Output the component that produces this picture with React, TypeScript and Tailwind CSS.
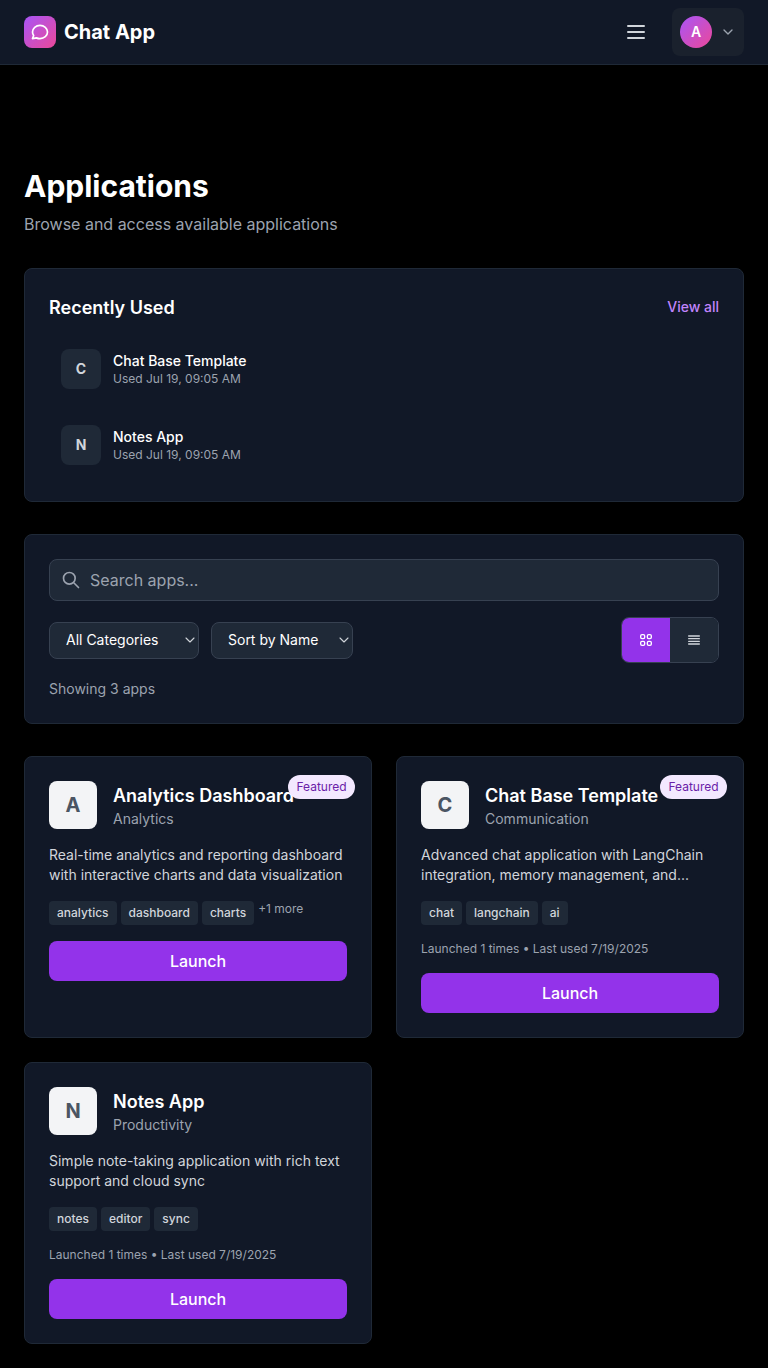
import React from "react";

type AppInfo = {
  name: string;
  category: string;
  description: string;
  tags: string[];
  more?: string;
  usage?: string;
  featured?: boolean;
};

const apps: AppInfo[] = [
  {
    name: "Analytics Dashboard",
    category: "Analytics",
    description: "Real-time analytics and reporting dashboard with interactive charts and data visualization",
    tags: ["analytics", "dashboard", "charts"],
    more: "+1 more",
    featured: true,
  },
  {
    name: "Chat Base Template",
    category: "Communication",
    description: "Advanced chat application with LangChain integration, memory management, and...",
    tags: ["chat", "langchain", "ai"],
    usage: "Launched 1 times • Last used 7/19/2025",
    featured: true,
  },
  {
    name: "Notes App",
    category: "Productivity",
    description: "Simple note-taking application with rich text support and cloud sync",
    tags: ["notes", "editor", "sync"],
    usage: "Launched 1 times • Last used 7/19/2025",
  },
];

const recent = ["Chat Base Template", "Notes App"];

function Icon({ d, className, strokeWidth = 2 }: { d: string; className: string; strokeWidth?: number }) {
  return (
    <svg
      className={className}
      viewBox="0 0 24 24"
      fill="none"
      stroke="currentColor"
      strokeWidth={strokeWidth}
      strokeLinecap="round"
      strokeLinejoin="round"
    >
      <path d={d} />
    </svg>
  );
}

function Header() {
  return (
    <header className="flex h-[65px] items-center justify-between border-b border-[#1f2937] bg-[#111827] px-6">
      <div className="flex items-center gap-2">
        <div className="flex size-8 items-center justify-center rounded-lg bg-linear-to-br/srgb from-[#a855f7] to-[#ec4899]">
          <Icon
            className="size-5 text-white"
            d="M21 12c0 4.418-4.03 8-9 8a9.863 9.863 0 01-4.255-.949L3 20l1.395-3.72C3.512 15.042 3 13.574 3 12c0-4.418 4.03-8 9-8s9 3.582 9 8z"
          />
        </div>
        <span className="text-xl font-bold text-white">Chat App</span>
      </div>
      <div className="flex items-center gap-4">
        <button className="p-2 text-[#d1d5db]" aria-label="Menu">
          <Icon className="size-6" d="M4 6h16M4 12h16M4 18h16" />
        </button>
        <button className="flex items-center gap-2 rounded-lg bg-[#1a212d] p-2">
          <span className="flex size-8 items-center justify-center rounded-full bg-linear-to-br/srgb from-[#a855f7] to-[#ec4899] text-sm font-semibold text-white">
            A
          </span>
          <Icon className="size-4 text-[#9ca3af]" d="M6 9l6 6 6-6" />
        </button>
      </div>
    </header>
  );
}

function Select({ label, className }: { label: string; className: string }) {
  return (
    <div className={`relative ${className}`}>
      <select className="block h-[37px] w-full appearance-none rounded-lg border border-[#374151] bg-[#1f2937] pb-2 pl-4 pt-[7px] text-sm text-white">
        <option>{label}</option>
      </select>
      <Icon
        className="pointer-events-none absolute right-px top-2.5 size-4 text-[#d1d5db]"
        strokeWidth={1.6}
        d="M6 9l6 6 6-6"
      />
    </div>
  );
}

function AppCard({ app }: { app: AppInfo }) {
  return (
    <article className="relative rounded-lg border border-[#1f2937] bg-[#111827] p-6">
      <div className="mb-4 flex items-center gap-4">
        <div className="flex size-12 shrink-0 items-center justify-center rounded-lg bg-[#f3f4f6] text-xl font-bold text-[#4b5563]">
          {app.name[0]}
        </div>
        <div className="min-w-0">
          <h3 className="h-7 whitespace-nowrap text-lg/[30px] font-semibold text-white">{app.name}</h3>
          <p className="text-sm text-[#9ca3af]">{app.category}</p>
        </div>
      </div>
      {app.featured && (
        <div className="absolute right-4 top-[17.5px] flex h-6 w-[67px] items-center justify-center rounded-full bg-[#f3e8ff] text-xs text-[#6b21a8]">
          Featured
        </div>
      )}
      <p className="mb-4 text-sm text-[#d1d5db]">{app.description}</p>
      <div className="mb-4 flex gap-1">
        {app.tags.map((tag) => (
          <span key={tag} className="rounded bg-[#1f2937] px-2 py-1 text-xs font-medium text-[#d1d5db]">
            {tag}
          </span>
        ))}
        {app.more && <span className="text-xs text-[#9ca3af]">{app.more}</span>}
      </div>
      {app.usage && <div className="mb-4 text-xs text-[#9ca3af]">{app.usage}</div>}
      <button className="h-10 w-full rounded-lg bg-[#9333ea] font-medium text-white">Launch</button>
    </article>
  );
}

export default function App() {
  return (
    <div className="min-h-[1368px] bg-black font-['Inter',sans-serif] text-white">
      <Header />
      <main className="px-6 pb-6 pt-[103px]">
        <div className="mb-8">
          <h1 className="mb-2 text-3xl font-bold">Applications</h1>
          <p className="text-[#9ca3af]">Browse and access available applications</p>
        </div>

        <section className="mb-8 rounded-lg border border-[#1f2937] bg-[#111827] p-6">
          <div className="mb-4 flex items-center justify-between">
            <h2 className="h-7 text-lg/[30px] font-semibold">Recently Used</h2>
            <button className="text-sm font-medium text-[#c084fc]">View all</button>
          </div>
          <div className="grid gap-3">
            {recent.map((name) => (
              <div key={name} className="flex items-center gap-3 rounded-lg p-3">
                <div className="flex size-10 items-center justify-center rounded-lg bg-[#1f2937] text-sm font-bold text-[#d1d5db]">
                  {name[0]}
                </div>
                <div>
                  <p className="text-sm font-medium">{name}</p>
                  <p className="text-xs text-[#9ca3af]">Used Jul 19, 09:05 AM</p>
                </div>
              </div>
            ))}
          </div>
        </section>

        <section className="mb-8 flex flex-col gap-4 rounded-lg border border-[#1f2937] bg-[#111827] p-6">
          <div className="flex h-[42px] items-center gap-[9px] rounded-lg border border-[#374151] bg-[#1f2937] px-[11px] text-[#9ca3af]">
            <Icon className="size-5 shrink-0" d="M21 21l-6-6m2-5a7 7 0 11-14 0 7 7 0 0114 0z" />
            <input
              className="min-w-0 flex-1 bg-transparent placeholder:text-[#9ca3af] focus:outline-none"
              placeholder="Search apps..."
            />
          </div>
          <div className="flex items-center justify-between">
            <div className="flex gap-3">
              <Select label="All Categories" className="w-[150px]" />
              <Select label="Sort by Name" className="w-[142px]" />
            </div>
            <div className="flex h-[46px] overflow-hidden rounded-lg border border-[#374151]">
              <button className="flex w-12 items-center justify-center bg-[#9333ea] text-white" aria-label="Grid view">
                <Icon
                  className="size-4"
                  d="M4 6a2 2 0 012-2h2a2 2 0 012 2v2a2 2 0 01-2 2H6a2 2 0 01-2-2V6zM14 6a2 2 0 012-2h2a2 2 0 012 2v2a2 2 0 01-2 2h-2a2 2 0 01-2-2V6zM4 16a2 2 0 012-2h2a2 2 0 012 2v2a2 2 0 01-2 2H6a2 2 0 01-2-2v-2zM14 16a2 2 0 012-2h2a2 2 0 012 2v2a2 2 0 01-2 2h-2a2 2 0 01-2-2v-2z"
                />
              </button>
              <button className="flex w-12 items-center justify-center bg-[#1f2937] text-[#d1d5db]" aria-label="List view">
                <Icon className="size-4" d="M4 6h16M4 10h16M4 14h16M4 18h16" />
              </button>
            </div>
          </div>
          <p className="text-sm text-[#9ca3af]">Showing 3 apps</p>
        </section>

        <section className="grid grid-cols-2 gap-6">
          {apps.map((app) => (
            <AppCard key={app.name} app={app} />
          ))}
        </section>
      </main>
    </div>
  );
}
